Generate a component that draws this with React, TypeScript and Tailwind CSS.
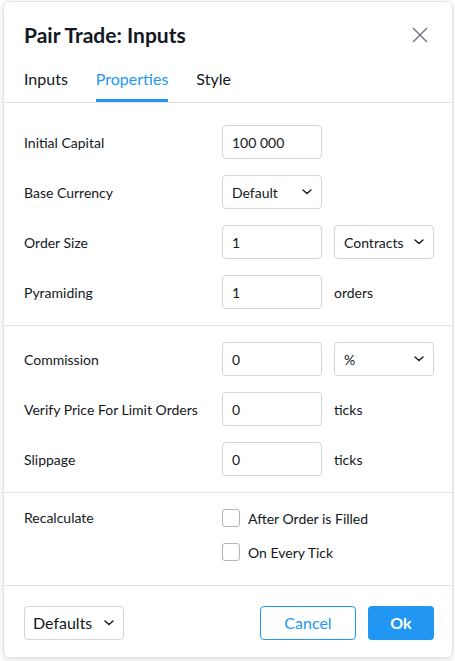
const FONT = "font-['Lato','Liberation_Sans',sans-serif]";

function Chevron() {
  return (
    <svg width="10" height="6" viewBox="0 0 10 6" fill="none" className="shrink-0">
      <path d="M1 1l4 3.6L9 1" stroke="#131722" strokeWidth="1.4" strokeLinecap="round" strokeLinejoin="round" />
    </svg>
  );
}

function TextInput({ value }: { value: string }) {
  return (
    <div className="w-[100px] h-[34px] shrink-0 border border-[#d1d4dc] rounded-[4px] flex items-center pl-[9px] text-[14px] text-[#131722]">
      {value}
    </div>
  );
}

function Select({ value }: { value: string }) {
  return (
    <div className="w-[100px] h-[34px] shrink-0 border border-[#d1d4dc] rounded-[4px] flex items-center justify-between pl-[9px] pr-[9px] text-[14px] text-[#131722]">
      <span>{value}</span>
      <Chevron />
    </div>
  );
}

function Row({ label, children }: { label: string; children: React.ReactNode }) {
  return (
    <div className="flex items-center h-[34px]">
      <div className="w-[198px] shrink-0 text-[14px] text-[#131722]">{label}</div>
      <div className="flex items-center gap-3">{children}</div>
    </div>
  );
}

function Unit({ text }: { text: string }) {
  return <span className="text-[14px] text-[#131722]">{text}</span>;
}

function Checkbox({ label }: { label: string }) {
  return (
    <div className="flex items-center gap-2 h-[18px]">
      <div className="w-[18px] h-[18px] border border-[#b2b5be] rounded-[3px] bg-white" />
      <span className="text-[14px] text-[#131722]">{label}</span>
    </div>
  );
}

export default function App() {
  return (
    <div className={`min-h-screen bg-white pt-px pl-[3px] ${FONT}`}>
      <div className="w-[450px] h-[657px] bg-white border border-[#e0e3eb] rounded-[6px] shadow-[0_2px_6px_rgba(0,0,0,0.12)] flex flex-col">
        {/* Header */}
        <div className="flex items-center justify-between pl-5 pr-6 pt-5">
          <h1 className="text-[21px] leading-[26px] font-bold text-[#131722]">Pair Trade: Inputs</h1>
          <svg width="16" height="16" viewBox="0 0 16 16" fill="none">
            <path d="M1 1l14 14M15 1L1 15" stroke="#787b86" strokeWidth="1.5" />
          </svg>
        </div>

        {/* Tabs */}
        <div className="h-[55px] flex items-end gap-[28px] px-5 border-b border-[#e0e3eb]">
          {["Inputs", "Properties", "Style"].map((t) => (
            <div
              key={t}
              className={`pb-[11px] border-b-[3px] text-[16px] leading-[19px] ${
                t === "Properties" ? "border-[#2196f3] text-[#2196f3]" : "border-transparent text-[#131722]"
              }`}
            >
              {t}
            </div>
          ))}
        </div>

        {/* Capital & orders */}
        <div className="flex flex-col gap-4 pl-5 pr-[18px] pt-[22px] pb-4 border-b border-[#e0e3eb]">
          <Row label="Initial Capital">
            <TextInput value="100 000" />
          </Row>
          <Row label="Base Currency">
            <Select value="Default" />
          </Row>
          <Row label="Order Size">
            <TextInput value="1" />
            <Select value="Contracts" />
          </Row>
          <Row label="Pyramiding">
            <TextInput value="1" />
            <Unit text="orders" />
          </Row>
        </div>

        {/* Costs */}
        <div className="flex flex-col gap-4 pl-5 pr-[18px] pt-4 pb-4 border-b border-[#e0e3eb]">
          <Row label="Commission">
            <TextInput value="0" />
            <Select value="%" />
          </Row>
          <Row label="Verify Price For Limit Orders">
            <TextInput value="0" />
            <Unit text="ticks" />
          </Row>
          <Row label="Slippage">
            <TextInput value="0" />
            <Unit text="ticks" />
          </Row>
        </div>

        {/* Recalculate */}
        <div className="flex pl-5 pr-[18px] pt-4 pb-6 border-b border-[#e0e3eb]">
          <div className="w-[198px] shrink-0 text-[14px] leading-[18px] text-[#131722]">Recalculate</div>
          <div className="flex flex-col gap-4">
            <Checkbox label="After Order is Filled" />
            <Checkbox label="On Every Tick" />
          </div>
        </div>

        {/* Footer */}
        <div className="flex items-center justify-between pl-5 pr-[18px] pt-5">
          <div className="w-[100px] h-[34px] border border-[#d1d4dc] rounded-[4px] flex items-center justify-between pl-2 pr-[9px] text-[16px] text-[#131722]">
            <span>Defaults</span>
            <Chevron />
          </div>
          <div className="flex items-center gap-3">
            <button className="w-[96px] h-[34px] border border-[#2196f3] rounded-[4px] text-[16px] text-[#2196f3] bg-white">
              Cancel
            </button>
            <button className="w-[66px] h-[34px] rounded-[4px] text-[16px] font-bold text-white bg-[#2196f3]">
              Ok
            </button>
          </div>
        </div>
      </div>
    </div>
  );
}
